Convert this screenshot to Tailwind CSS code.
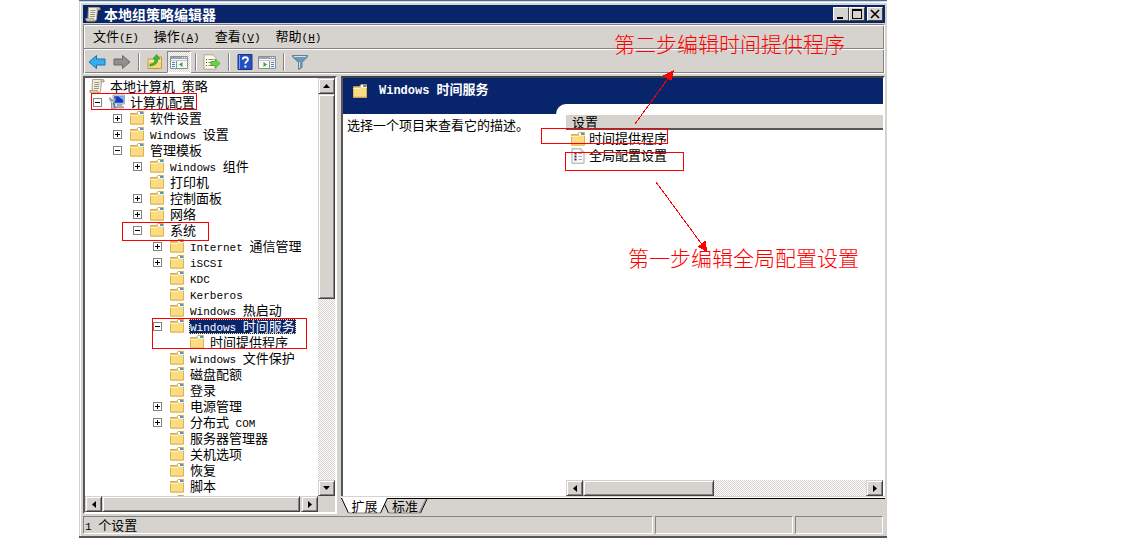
<!DOCTYPE html>
<html lang="zh-CN">
  <head>
    <meta charset="UTF-8" />
    <meta name="viewport" content="width=device-width, initial-scale=1.0" />
    <title>本地组策略编辑器</title>
    <script src="https://cdn.jsdelivr.net/npm/@tailwindcss/browser@4"></script>
  </head>
  <body class="relative bg-white text-black text-[13px] leading-4 font-['Noto_Sans_CJK_SC',sans-serif]">
    <!-- Icon sprite -->
    <svg class="hidden" aria-hidden="true">
      <symbol id="folder" viewBox="0 0 16 16">
        <path d="M1.500 14V3.500h6l1.500-2h5.500V14z" fill="#e8c46c" stroke="#c9a045" stroke-width=".8" />
        <path d="M9 2h5v3H9z" fill="#fff" />
        <path d="M11 2h3v2h-3z" fill="#3d9be8" />
        <path d="M1 5h7.500l1-1H15v10.500H1z" fill="#fbdc83" />
        <path d="M1.500 5.500h7l1-1h5" fill="none" stroke="#fff0bd" />
        <path d="M1.500 6v8h13V5" fill="none" stroke="#dcb256" />
      </symbol>
      <symbol id="scroll" viewBox="0 0 16 16">
        <path d="M3.500 1.500h10q2 0 1.500 2h-2.500L11.500 13q0 2-2 2H2.500q-2 0-1.500-2.500h2z" fill="#f6edcc" stroke="#aaa08a" />
        <path d="M13 1.500q-1.500.5-1 2.500h3q.3-2.500-2-2.500zM1 12.500h7.500q0 2.500 1.500 2.500H2.500Q.5 15 1 12.500z" fill="#d9cfaa" stroke="#96907c" stroke-width=".7" />
        <path d="M5.500 4.500h5M5.300 6.500h5M5 8.500h5M4.800 10.500h5" stroke="#8d93ad" />
      </symbol>
      <symbol id="computer" viewBox="0 0 16 16">
        <path d="M4 1h11.500v9H4z" fill="#dfe6ee" stroke="#8f98a3" stroke-width=".8" />
        <path d="M5.200 2.200h9.200v6.600H5.200z" fill="#1437c8" />
        <path d="M9 2.200h5.400v4z" fill="#7fb4ff" />
        <path d="M8.500 10h4v2.500h2V14H7v-1.500h1.500z" fill="#aab2bb" stroke="#7d858e" stroke-width=".5" />
        <path d="M.8 3.500v3l1.700 1.700V14q0 1.500 1.300 1.500T5 14V8.200l1.500-1.700v-3L5 5v1.500H2.500V5z" fill="#c7ced5" stroke="#68717b" stroke-width=".7" />
        <path d="M4.500 9l2 5.500" stroke="#3f7fb0" stroke-width="1.500" />
      </symbol>
      <symbol id="policy" viewBox="0 0 16 16">
        <path d="M2 .8h9l3 3v11.400H2z" fill="#fafafa" stroke="#a5a5a5" />
        <path d="M11 .8v3h3" fill="#e4e4e4" stroke="#a5a5a5" stroke-width=".7" />
        <path d="M4.500 5.500h2M4.500 8.500h2M4.500 11.500h2" stroke="#33334d" stroke-width="1.800" />
        <path d="M8.500 5.500h3.500M8.500 8.500h3.500M8.500 11.500h3.500" stroke="#a79fc4" />
      </symbol>
      <symbol id="arrow" viewBox="0 0 18 16">
        <path d="M1 8l7.500-6.500V5H17v6H8.500v3.500z" />
      </symbol>
      <symbol id="pane" viewBox="0 0 18 16">
        <path d="M.5 2.500h17v12H.5z" fill="#f7f7f7" stroke="#8a8f98" />
        <path d="M1 3h16v2H1z" fill="#9aa3b2" />
        <path d="M12 3.500h1M14 3.500h1M16 3.500h.7" stroke="#fff" />
        <path d="M1 6.500h16" stroke="#c3c8d0" />
      </symbol>
    </svg>

    <!-- Application window -->
    <div class="ml-[79px] mr-[235px] h-screen min-h-[400px] flex flex-col bg-[#d6d3ce] border-t border-t-[#3a6ea5] border-b-2 border-b-[#55555a] pl-1 pr-0.5 shadow-[inset_1px_1px_#d6d3ce,inset_2px_2px_#fff]">
      <!-- Title bar -->
      <header class="mt-1 h-[18px] shrink-0 flex items-center bg-[#08246b] pl-0.5 pr-0.5">
        <svg class="size-4"><use href="#scroll" /></svg>
        <h1 class="ml-[3px] flex-1 text-[14px] leading-[14px] font-bold text-white">本地组策略编辑器</h1>
        <button aria-label="最小化" class="w-4 h-3.5 bg-[#d6d3ce] border border-t-white border-l-white border-r-[#424142] border-b-[#424142]">
          <svg viewBox="0 0 14 12" class="w-full h-full"><path d="M3 9h6v2H3z" /></svg>
        </button>
        <button aria-label="最大化" class="w-4 h-3.5 bg-[#d6d3ce] border border-t-white border-l-white border-r-[#424142] border-b-[#424142]">
          <svg viewBox="0 0 14 12" class="w-full h-full"><path d="M2 1h10v10H2zM3 3v7h8V3z" fill-rule="evenodd" /></svg>
        </button>
        <button aria-label="关闭" class="ml-0.5 w-4 h-3.5 bg-[#d6d3ce] border border-t-white border-l-white border-r-[#424142] border-b-[#424142]">
          <svg viewBox="0 0 14 12" class="w-full h-full"><path d="M3 2l8 8M11 2l-8 8" stroke="#000" stroke-width="1.600" /></svg>
        </button>
      </header>

      <!-- Menu and toolbar -->
      <div class="mt-px h-[50px] shrink-0 border border-[#848284] border-r-white border-b-white shadow-[inset_1px_1px_#fff,inset_-1px_-1px_#848284]">
        <nav class="h-6 pt-px pl-[9px] flex items-center gap-[15px] border-b border-[#848284]">
          <button>文件<span class="font-['Liberation_Mono'] text-[11px]">(<u>F</u>)</span></button>
          <button>操作<span class="font-['Liberation_Mono'] text-[11px]">(<u>A</u>)</span></button>
          <button>查看<span class="font-['Liberation_Mono'] text-[11px]">(<u>V</u>)</span></button>
          <button>帮助<span class="font-['Liberation_Mono'] text-[11px]">(<u>H</u>)</span></button>
        </nav>
        <div class="h-6 pl-1 flex items-center border-t border-white">
          <button aria-label="后退"><svg class="w-[18px] h-4 fill-[#35aef0] stroke-[#1673b8]"><use href="#arrow" /></svg></button>
          <button aria-label="前进" class="ml-[7px] -scale-x-100"><svg class="w-[18px] h-4 fill-[#8f8f8f] stroke-[#6b6b6b]"><use href="#arrow" /></svg></button>
          <span class="mx-[7px] h-[18px] w-0.5 border-l border-l-[#848284] border-r border-r-white"></span>
          <button aria-label="上移">
            <svg viewBox="0 0 16 16" class="size-4">
              <path d="M1 5h6l1-2h6.500v11.500H1z" fill="#f6d67c" stroke="#c59b3e" />
              <path d="M1.500 7H14" stroke="#fff0bd" />
              <path d="M3 10q5 0 5-5H6l3.500-4.500L13 5h-2q0 6-8 7z" fill="#43b52e" stroke="#2b8a1c" stroke-width=".6" />
            </svg>
          </button>
          <button aria-label="显示/隐藏控制台树" aria-pressed="true" class="ml-1 w-6 h-[22px] flex items-center justify-center border border-t-[#848284] border-l-[#848284] border-r-white border-b-white bg-[repeating-conic-gradient(#fff_0_25%,#d6d3ce_0_50%)] bg-[length:2px_2px]">
            <svg viewBox="0 0 18 16" class="w-[18px] h-4">
              <use href="#pane" />
              <path d="M6.500 7v7" stroke="#8a8f98" />
              <path d="M2 8.500h3M2 10.500h3M2 12.500h3" stroke="#4583c4" />
              <path d="M12.500 8v5L9 10.500z" fill="#2faa23" />
            </svg>
          </button>
          <span class="mx-1 h-[18px] w-0.5 border-l border-l-[#848284] border-r border-r-white"></span>
          <button aria-label="导出列表" class="ml-0.5">
            <svg viewBox="0 0 18 16" class="w-[18px] h-4">
              <path d="M1 .8h9l3 3v11.400H1z" fill="#fffbe6" stroke="#aaa68f" />
              <path d="M3 5.500h1M3 8.500h1M3 11.500h1" stroke="#444" />
              <path d="M5.500 5.500h5M5.500 8.500h3M5.500 11.500h5" stroke="#8e8b78" />
              <path d="M8 7.500h4V5l5 4.500-5 4.500v-2.500H8z" fill="#68d548" stroke="#35982a" stroke-width=".7" />
            </svg>
          </button>
          <span class="mx-[7px] h-[18px] w-0.5 border-l border-l-[#848284] border-r border-r-white"></span>
          <button aria-label="帮助" class="w-4">
            <svg viewBox="0 0 16 16" class="size-4">
              <path d="M1 .5h14v15H1z" fill="#2450c4" stroke="#1a348a" />
              <path d="M2.500 1v14" stroke="#7f9ff0" />
              <path d="M5.800 5.500q0-2.300 2.600-2.300 2.500 0 2.500 2.200 0 1.400-1.300 2.100-1.200.7-1.200 2.300" fill="none" stroke="#fff" stroke-width="1.900" />
              <path d="M7.400 11.500h2v2h-2z" fill="#fff" />
            </svg>
          </button>
          <button aria-label="显示/隐藏操作窗格" class="ml-[5px]">
            <svg viewBox="0 0 18 16" class="w-[18px] h-4">
              <use href="#pane" />
              <path d="M11.500 7v7" stroke="#8a8f98" />
              <path d="M13 8.500h3M13 10.500h3M13 12.500h3" stroke="#4583c4" />
              <path d="M5.500 8v5L9 10.500z" fill="#2faa23" />
            </svg>
          </button>
          <span class="mx-[7px] h-[18px] w-0.5 border-l border-l-[#848284] border-r border-r-white"></span>
          <button aria-label="筛选器">
            <svg viewBox="0 0 16 16" class="size-4">
              <path d="M.5 1.500h15v1.300L10 8.500v5L6.500 15.500v-7L.5 2.800z" fill="#6e97b5" stroke="#4d7391" stroke-width=".8" />
              <path d="M2 2.500h12M7.500 8v6" stroke="#c9e0ee" />
            </svg>
          </button>
        </div>
      </div>

      <main class="mt-0.5 flex-1 min-h-0 flex gap-1">
        <!-- Console tree -->
        <section class="w-[254px] shrink-0 flex flex-col border-2 border-t-[#55555a] border-l-[#55555a] border-r-white border-b-white">
          <div class="flex-1 min-h-0 flex">
            <ul id="tree" role="tree" class="flex-1 overflow-hidden bg-white"></ul>
            <div class="w-[17px] flex flex-col bg-[repeating-conic-gradient(#fff_0_25%,#d6d3ce_0_50%)] bg-[length:2px_2px]">
              <button aria-label="向上滚动" class="h-4 shrink-0 flex items-center justify-center bg-[#d6d3ce] border border-t-[#d6d3ce] border-l-[#d6d3ce] border-r-[#424142] border-b-[#424142] shadow-[inset_1px_1px_#fff,inset_-1px_-1px_#848284]">
                <svg viewBox="0 0 7 4" class="w-[7px] h-1"><path d="M0 4h7L3.500 0z" /></svg>
              </button>
              <div class="h-[205px] bg-[#d6d3ce] border border-t-[#d6d3ce] border-l-[#d6d3ce] border-r-[#424142] border-b-[#424142] shadow-[inset_1px_1px_#fff,inset_-1px_-1px_#848284]"></div>
              <button aria-label="向下滚动" class="mt-auto h-4 shrink-0 flex items-center justify-center bg-[#d6d3ce] border border-t-[#d6d3ce] border-l-[#d6d3ce] border-r-[#424142] border-b-[#424142] shadow-[inset_1px_1px_#fff,inset_-1px_-1px_#848284]">
                <svg viewBox="0 0 7 4" class="w-[7px] h-1"><path d="M0 0h7L3.500 4z" /></svg>
              </button>
            </div>
          </div>
          <div class="h-4 shrink-0 flex pr-[17px] bg-[#d6d3ce]">
            <button aria-label="向左滚动" class="w-[17px] flex items-center justify-center bg-[#d6d3ce] border border-t-[#d6d3ce] border-l-[#d6d3ce] border-r-[#424142] border-b-[#424142] shadow-[inset_1px_1px_#fff,inset_-1px_-1px_#848284]">
              <svg viewBox="0 0 4 7" class="w-1 h-[7px]"><path d="M4 0v7L0 3.500z" /></svg>
            </button>
            <div class="flex-1 mr-px bg-[#d6d3ce] border border-t-[#d6d3ce] border-l-[#d6d3ce] border-r-[#424142] border-b-[#424142] shadow-[inset_1px_1px_#fff,inset_-1px_-1px_#848284]"></div>
            <button aria-label="向右滚动" class="w-[17px] flex items-center justify-center bg-[#d6d3ce] border border-t-[#d6d3ce] border-l-[#d6d3ce] border-r-[#424142] border-b-[#424142] shadow-[inset_1px_1px_#fff,inset_-1px_-1px_#848284]">
              <svg viewBox="0 0 4 7" class="w-1 h-[7px]"><path d="M0 0v7L4 3.500z" /></svg>
            </button>
          </div>
        </section>

        <!-- Details -->
        <section class="flex-1 min-w-0 flex flex-col">
          <div class="flex-1 min-h-0 flex flex-col border-2 border-t-[#424142] border-l-[#55555a] border-b-0 border-r-white bg-white">
            <div class="h-[26px] shrink-0 flex items-center bg-[#08246b] pl-[9px] text-white font-bold">
              <svg class="size-4"><use href="#folder" /></svg>
              <h2 class="ml-[11px] pb-0.5"><span class="font-['Liberation_Mono'] text-[12px]">Windows </span>时间服务</h2>
            </div>
            <div class="flex-1 min-h-0 flex">
              <p class="w-[213px] shrink-0 border-t-[10px] border-[#08246b] pt-[3px] pl-1 whitespace-nowrap">选择一个项目来查看它的描述。</p>
              <div class="flex-1 min-w-0 bg-[linear-gradient(#08246b_10px,#fff_10px)]">
                <div class="h-full flex flex-col bg-white rounded-tl-[10px] pt-[11px] pl-2.5">
                  <table class="w-full text-left border-separate border-spacing-0">
                    <thead>
                      <tr class="bg-[#d6d3ce]">
                        <th class="h-[15px] p-0 pl-1.5 border-b-2 border-[#55555a] font-normal leading-[13px]">设置</th>
                      </tr>
                    </thead>
                    <tbody>
                      <tr>
                        <td class="p-0 pl-1"><a href="#" class="h-[17px] flex items-center gap-[3px] leading-[15px]"><svg class="size-4"><use href="#folder" /></svg><span class="pb-0.5">时间提供程序</span></a></td>
                      </tr>
                      <tr>
                        <td class="p-0 pl-1"><a href="#" class="h-[17px] flex items-center gap-[3px] leading-[15px]"><svg class="size-4"><use href="#policy" /></svg><span class="pb-0.5">全局配置设置</span></a></td>
                      </tr>
                    </tbody>
                  </table>
                  <div class="mt-auto h-4 flex bg-[repeating-conic-gradient(#fff_0_25%,#d6d3ce_0_50%)] bg-[length:2px_2px]">
                    <button aria-label="向左滚动" class="w-[17px] flex items-center justify-center bg-[#d6d3ce] border border-t-[#d6d3ce] border-l-[#d6d3ce] border-r-[#424142] border-b-[#424142] shadow-[inset_1px_1px_#fff,inset_-1px_-1px_#848284]">
                      <svg viewBox="0 0 4 7" class="w-1 h-[7px]"><path d="M4 0v7L0 3.500z" /></svg>
                    </button>
                    <div class="w-[131px] bg-[#d6d3ce] border border-t-[#d6d3ce] border-l-[#d6d3ce] border-r-[#424142] border-b-[#424142] shadow-[inset_1px_1px_#fff,inset_-1px_-1px_#848284]"></div>
                    <button aria-label="向右滚动" class="ml-auto w-[17px] flex items-center justify-center bg-[#d6d3ce] border border-t-[#d6d3ce] border-l-[#d6d3ce] border-r-[#424142] border-b-[#424142] shadow-[inset_1px_1px_#fff,inset_-1px_-1px_#848284]">
                      <svg viewBox="0 0 4 7" class="w-1 h-[7px]"><path d="M0 0v7L4 3.500z" /></svg>
                    </button>
                  </div>
                </div>
              </div>
            </div>
          </div>
          <!-- View tabs -->
          <div role="tablist" class="h-[18px] shrink-0 flex border-t border-[#d6d3ce] shadow-[inset_0_1px_#fff,inset_0_2px_#000]">
            <button role="tab" aria-selected="true" class="relative z-10 w-[47px] h-[17px]">
              <svg viewBox="0 0 47 17" class="absolute inset-0 w-full h-full"><path d="M.5 1l7 15h32l7-15z" fill="#fff" /><path d="M.5 1l7 15M39.500 16l7-15" stroke="#000" /><path d="M7.500 16h32" stroke="#848284" /></svg>
              <span class="relative">扩展</span>
            </button>
            <button role="tab" aria-selected="false" class="relative -ml-1.5 w-[46px] h-[17px]">
              <svg viewBox="0 0 46 17" class="absolute inset-0 w-full h-full"><path d="M2 6l4.500 10M38.500 16l7-15" stroke="#000" /><path d="M6.500 16h32M37 16l7-14" stroke="#848284" /></svg>
              <span class="relative">标准</span>
            </button>
          </div>
        </section>
      </main>

      <!-- Status bar -->
      <footer class="mt-0.5 mb-0.5 h-[18px] shrink-0 flex gap-0.5 pr-0.5">
        <p class="flex-1 pl-px leading-[15px] border border-t-[#848284] border-l-[#848284] border-r-white border-b-white"><span class="font-['Liberation_Mono'] text-[11px]">1 </span>个设置</p>
        <div class="w-[138px] border border-t-[#848284] border-l-[#848284] border-r-white border-b-white"></div>
        <div class="w-[88px] border border-t-[#848284] border-l-[#848284] border-r-white border-b-white"></div>
      </footer>
    </div>

    <!-- Step annotations -->
    <div class="absolute inset-0 overflow-hidden pointer-events-none text-[#f00] text-[21px] leading-6 font-light">
      <div class="absolute left-[91px] top-[93px] w-[106px] h-[17px] border border-[#f00]"></div>
      <div class="absolute left-[122px] top-[222px] w-[87px] h-[19px] border border-[#f00]"></div>
      <div class="absolute left-[152px] top-[318px] w-[155px] h-[31px] border border-[#f00]"></div>
      <div class="absolute left-[541px] top-[128px] w-[127px] h-[16px] border border-[#f00]"></div>
      <div class="absolute left-[565px] top-[152px] w-[119px] h-[19px] border border-[#f00]"></div>
      <svg class="absolute inset-0 w-full h-full" fill="none" stroke="#f00" shape-rendering="crispEdges">
        <path d="M635 124l37-51M656 182l50 68" />
        <path d="M674 70l-12 6 3 1 5 3 2 0zM707 252l-10-6 3-1 4-4 2 0z" fill="#f00" stroke="none" />
      </svg>
      <p class="absolute left-[614px] top-[31px] whitespace-nowrap">第二步编辑时间提供程序</p>
      <p class="absolute left-[628px] top-[245px] whitespace-nowrap">第一步编辑全局配置设置</p>
    </div>

    <script>
      // [level, toggle, label, icon]
      const nodes = [
        [0, "", "本地计算机 策略", "scroll"],
        [1, "-", "计算机配置", "computer"],
        [2, "+", "软件设置"],
        [2, "+", "Windows 设置"],
        [2, "-", "管理模板"],
        [3, "+", "Windows 组件"],
        [3, "", "打印机"],
        [3, "+", "控制面板"],
        [3, "+", "网络"],
        [3, "-", "系统"],
        [4, "+", "Internet 通信管理"],
        [4, "+", "iSCSI"],
        [4, "", "KDC"],
        [4, "", "Kerberos"],
        [4, "", "Windows 热启动"],
        [4, "-", "Windows 时间服务"],
        [5, "", "时间提供程序"],
        [4, "", "Windows 文件保护"],
        [4, "", "磁盘配额"],
        [4, "", "登录"],
        [4, "+", "电源管理"],
        [4, "+", "分布式 COM"],
        [4, "", "服务器管理器"],
        [4, "", "关机选项"],
        [4, "", "恢复"],
        [4, "", "脚本"],
        [4, "", ""],
      ];
      const selected = "Windows 时间服务";

      document.getElementById("tree").innerHTML = nodes
        .map(([level, toggle, label, icon = "folder"]) => {
          const text = label.replace(/[A-Za-z ]+/g, `<span class="font-['Liberation_Mono'] text-[11px]">$&</span>`);
          const box = toggle
            ? `<button aria-label="${toggle === "+" ? "展开" : "折叠"}" class="size-[9px] mr-[7px] shrink-0 border border-[#848284] bg-white">
                <svg viewBox="0 0 7 7" class="size-[7px]"><path d="${toggle === "+" ? "M1 3.500h5M3.500 1v5" : "M1 3.500h5"}" stroke="#000" /></svg>
              </button>`
            : "";
          const indent = 4 + 20 * level - (toggle ? 16 : 0);
          const mark = label === selected ? "bg-[#08246b] text-white outline-1 outline-dotted -outline-offset-1 outline-[#f7db94]" : "";
          return `<li role="treeitem" class="h-4 flex items-center whitespace-nowrap" style="padding-left:${indent}px">
            ${box}<svg class="size-4 shrink-0"><use href="#${icon}" /></svg>
            <span class="ml-1 px-px h-[15px] leading-[13px] ${mark}">${text}</span>
          </li>`;
        })
        .join("");
    </script>
  </body>
</html>
